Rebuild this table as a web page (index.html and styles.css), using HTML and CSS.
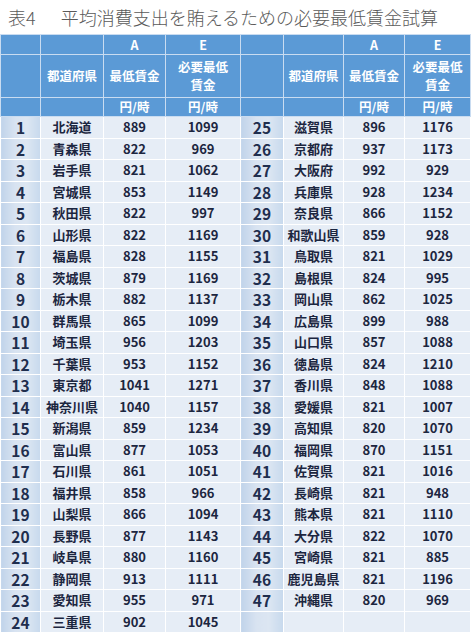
FILE: index.html
```html
<!DOCTYPE html>
<html lang="ja">
<head>
<meta charset="utf-8">
<title>表4</title>
<link rel="stylesheet" href="styles.css">
</head>
<body>
<h1 class="title"><span class="lbl">表4</span><span class="txt">平均消費支出を賄えるための必要最低賃金試算</span></h1>
<table class="grid">
<colgroup>
<col class="c-no1"><col class="c-pref1"><col class="c-a1"><col class="c-e1">
<col class="c-no2"><col class="c-pref2"><col class="c-a2"><col class="c-e2">
</colgroup>
<thead>
<tr class="h1">
<th></th><th></th><th>A</th><th>E</th>
<th></th><th></th><th>A</th><th>E</th>
</tr>
<tr class="h2">
<th></th><th>都道府県</th><th>最低賃金</th><th><span class="ln">必要最低</span><span class="ln">賃金</span></th>
<th></th><th>都道府県</th><th>最低賃金</th><th><span class="ln">必要最低</span><span class="ln">賃金</span></th>
</tr>
<tr class="h3">
<th></th><th></th><th>円/時</th><th>円/時</th>
<th></th><th></th><th>円/時</th><th>円/時</th>
</tr>
</thead>
<tbody>
<tr><td class="no">1</td><td>北海道</td><td>889</td><td>1099</td><td class="no">25</td><td>滋賀県</td><td>896</td><td>1176</td></tr>
<tr><td class="no">2</td><td>青森県</td><td>822</td><td>969</td><td class="no">26</td><td>京都府</td><td>937</td><td>1173</td></tr>
<tr><td class="no">3</td><td>岩手県</td><td>821</td><td>1062</td><td class="no">27</td><td>大阪府</td><td>992</td><td>929</td></tr>
<tr><td class="no">4</td><td>宮城県</td><td>853</td><td>1149</td><td class="no">28</td><td>兵庫県</td><td>928</td><td>1234</td></tr>
<tr><td class="no">5</td><td>秋田県</td><td>822</td><td>997</td><td class="no">29</td><td>奈良県</td><td>866</td><td>1152</td></tr>
<tr><td class="no">6</td><td>山形県</td><td>822</td><td>1169</td><td class="no">30</td><td>和歌山県</td><td>859</td><td>928</td></tr>
<tr><td class="no">7</td><td>福島県</td><td>828</td><td>1155</td><td class="no">31</td><td>鳥取県</td><td>821</td><td>1029</td></tr>
<tr><td class="no">8</td><td>茨城県</td><td>879</td><td>1169</td><td class="no">32</td><td>島根県</td><td>824</td><td>995</td></tr>
<tr><td class="no">9</td><td>栃木県</td><td>882</td><td>1137</td><td class="no">33</td><td>岡山県</td><td>862</td><td>1025</td></tr>
<tr><td class="no">10</td><td>群馬県</td><td>865</td><td>1099</td><td class="no">34</td><td>広島県</td><td>899</td><td>988</td></tr>
<tr><td class="no">11</td><td>埼玉県</td><td>956</td><td>1203</td><td class="no">35</td><td>山口県</td><td>857</td><td>1088</td></tr>
<tr><td class="no">12</td><td>千葉県</td><td>953</td><td>1152</td><td class="no">36</td><td>徳島県</td><td>824</td><td>1210</td></tr>
<tr><td class="no">13</td><td>東京都</td><td>1041</td><td>1271</td><td class="no">37</td><td>香川県</td><td>848</td><td>1088</td></tr>
<tr><td class="no">14</td><td>神奈川県</td><td>1040</td><td>1157</td><td class="no">38</td><td>愛媛県</td><td>821</td><td>1007</td></tr>
<tr><td class="no">15</td><td>新潟県</td><td>859</td><td>1234</td><td class="no">39</td><td>高知県</td><td>820</td><td>1070</td></tr>
<tr><td class="no">16</td><td>富山県</td><td>877</td><td>1053</td><td class="no">40</td><td>福岡県</td><td>870</td><td>1151</td></tr>
<tr><td class="no">17</td><td>石川県</td><td>861</td><td>1051</td><td class="no">41</td><td>佐賀県</td><td>821</td><td>1016</td></tr>
<tr><td class="no">18</td><td>福井県</td><td>858</td><td>966</td><td class="no">42</td><td>長崎県</td><td>821</td><td>948</td></tr>
<tr><td class="no">19</td><td>山梨県</td><td>866</td><td>1094</td><td class="no">43</td><td>熊本県</td><td>821</td><td>1110</td></tr>
<tr><td class="no">20</td><td>長野県</td><td>877</td><td>1143</td><td class="no">44</td><td>大分県</td><td>822</td><td>1070</td></tr>
<tr><td class="no">21</td><td>岐阜県</td><td>880</td><td>1160</td><td class="no">45</td><td>宮崎県</td><td>821</td><td>885</td></tr>
<tr><td class="no">22</td><td>静岡県</td><td>913</td><td>1111</td><td class="no">46</td><td>鹿児島県</td><td>821</td><td>1196</td></tr>
<tr><td class="no">23</td><td>愛知県</td><td>955</td><td>971</td><td class="no">47</td><td>沖縄県</td><td>820</td><td>969</td></tr>
<tr><td class="no">24</td><td>三重県</td><td>902</td><td>1045</td><td class="no"></td><td></td><td></td><td></td></tr>
</tbody>
</table>
</body>
</html>
```

FILE: styles.css
```css
html, body {
  margin: 0;
  padding: 0;
  background: #ffffff;
}

body {
  font-family: "Noto Sans CJK JP", "Noto Sans", sans-serif;
  width: 473px;
}

.title {
  margin: 0;
  padding: 0 0 0 8px;
  height: 34px;
  display: flex;
  align-items: center;
  gap: 25px;
  font-size: 18px;
  font-weight: 300;
  color: #5a5a5a;
  white-space: nowrap;
}

.grid {
  border-collapse: collapse;
  table-layout: fixed;
  width: 470px;
  margin: 0;
}

.c-no1 { width: 40px; }
.c-pref1 { width: 63px; }
.c-a1 { width: 62px; }
.c-e1 { width: 75px; }
.c-no2 { width: 43px; }
.c-pref2 { width: 60px; }
.c-a2 { width: 61px; }
.c-e2 { width: 66px; }

.grid th {
  background: #5b9ad6;
  color: #ffffff;
  font-weight: 700;
  font-size: 12.5px;
  line-height: 16px;
  padding: 0;
  text-align: center;
  border: 1px solid #c9dcf1;
}

.grid th .ln {
  display: block;
  line-height: 18px;
}

.grid tr.h1 th { height: 19px; }
.grid tr.h2 th { height: 42px; }
.grid tr.h3 th { height: 18px; }

.grid td {
  background: #e6edf6;
  color: #1c2640;
  font-weight: 700;
  font-size: 13px;
  line-height: 16px;
  padding: 0;
  height: 20.5px;
  text-align: center;
  border: 1px solid #ffffff;
}

.grid td.no {
  background: linear-gradient(to right, #c1d4ea 0%, #d8e3f1 35%, #dce6f2 65%, #c7d9ed 100%);
  font-size: 15.5px;
  color: #1f2e4e;
}

.grid tbody tr:first-child td {
  border-top-color: #c9dcf1;
}
```
